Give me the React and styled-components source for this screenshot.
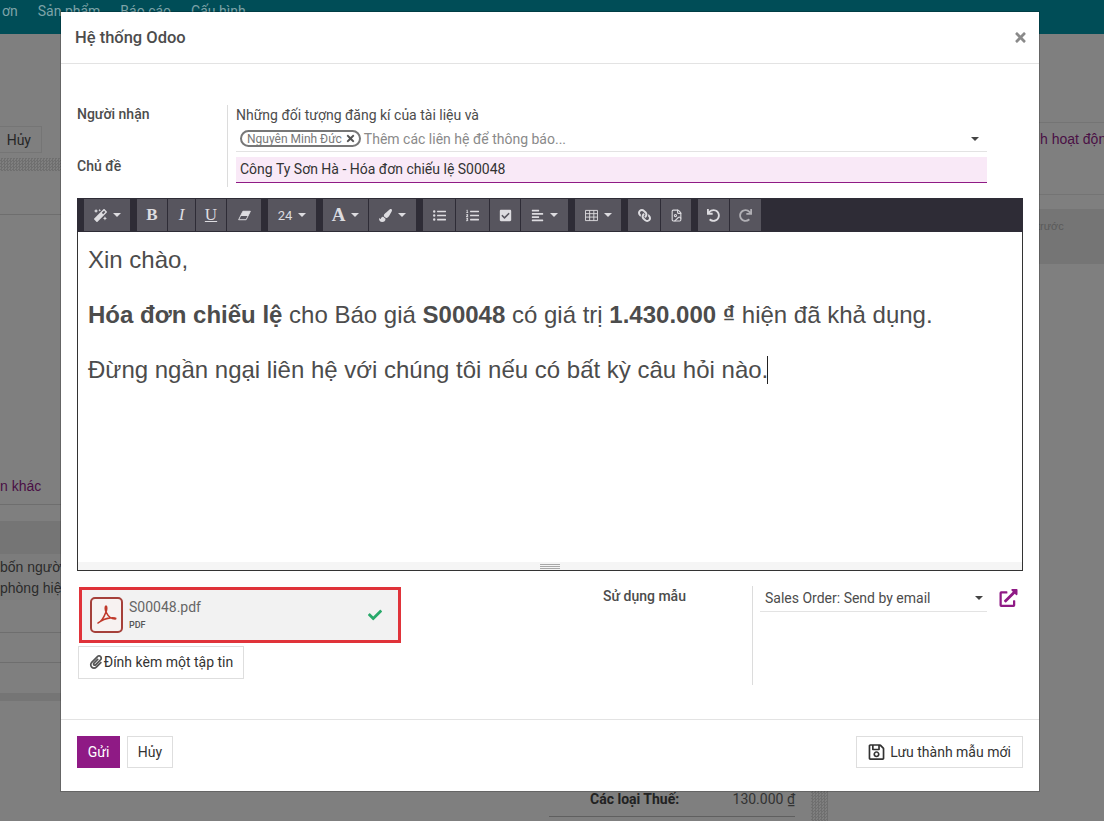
import React from "react";
import styled, { createGlobalStyle } from "styled-components";
import {
  FaMagic,
  FaPaintBrush,
  FaListUl,
  FaListOl,
  FaCheckSquare,
  FaAlignLeft,
  FaLink,
  FaUndo,
  FaRedo,
  FaPaperclip,
  FaRegSave,
  FaExternalLinkAlt,
  FaCheck,
  FaTimes,
} from "react-icons/fa";
import { FileImage } from "lucide-react";

const GlobalStyle = createGlobalStyle`
  html, body {
    margin: 0;
    padding: 0;
    background: #7f7f7f;
    font-family: Roboto, "Liberation Sans", sans-serif;
  }
  * { box-sizing: border-box; }
`;

const Page = styled.div`
  position: relative;
  width: 1104px;
  height: 821px;
  overflow: hidden;
  background: #7f7f7f;
  color: #333;
`;

/* dimmed page behind the dialog */
const TopBar = styled.div`
  display: flex;
  gap: 20px;
  height: 34px;
  padding: 1px 0 0 2px;
  background: #004d57;
  color: #7ea3a8;
  font-size: 14px;
  line-height: 21px;
`;

const PageBody = styled.div`
  display: flex;
  height: 787px;
`;

const MainCol = styled.div`
  width: 811px;
  flex: none;
  display: flex;
  flex-direction: column;
`;

const ControlRow = styled.div`
  height: 124px;
  padding-top: 92px;
  flex: none;
`;

const GhostButton = styled.div`
  width: 42px;
  height: 27px;
  border: 1px solid #757575;
  border-left: 0;
  text-align: right;
  padding-right: 10px;
  font-size: 14px;
  line-height: 26px;
  color: #262626;
`;

const PatternStrip = styled.div`
  flex: none;
  height: 13px;
  background: repeating-conic-gradient(#6f6f6f 0 25%, #7f7f7f 0 50%) 0 0 / 3px 3px;
`;

const Spacer = styled.div`
  flex: none;
  height: ${(p) => p.$h}px;
  border-bottom: ${(p) => (p.$line ? "1px solid #6e6e6e" : "0")};
  background: ${(p) => p.$bg || "transparent"};
`;

const BackLink = styled.div`
  flex: none;
  height: 19px;
  font-family: "Liberation Sans", sans-serif;
  font-size: 14px;
  line-height: 19px;
  color: #4a0f45;
`;

const BackNote = styled.div`
  flex: none;
  height: 46px;
  padding-top: 3px;
  background: #7c7c7c;
  border-bottom: 1px solid #7c7c7c;
  font-family: "Liberation Sans", sans-serif;
  font-size: 14px;
  line-height: 21px;
  color: #2b2b2b;
  white-space: nowrap;
`;

const Totals = styled.div`
  display: flex;
  justify-content: space-between;
  flex: none;
  width: 246px;
  margin-left: 549px;
  padding: 0 0 7px 41px;
  border-bottom: 1px solid #5f5f5f;
  font-size: 14px;
  line-height: 20px;
  color: #222;
  b { font-weight: 700; }
  span { color: #333; }
`;

const ScrollStrip = styled.div`
  width: 17px;
  flex: none;
  background: repeating-conic-gradient(#6f6f6f 0 25%, #7f7f7f 0 50%) 0 0 / 3px 3px;
`;

const SideCol = styled.div`
  flex: 1;
  min-width: 0;
  overflow: hidden;
  display: flex;
  flex-direction: column;
`;

const SideAction = styled.div`
  flex: none;
  height: 73px;
  margin-top: 88px;
  padding: 6px 0 0 212px;
  border-top: 1px solid #747474;
  border-bottom: 1px solid #747474;
  font-family: "Liberation Sans", sans-serif;
  font-size: 14px;
  line-height: 20px;
  color: #4a0f45;
  white-space: nowrap;
`;

const SideNote = styled.div`
  flex: none;
  height: 55px;
  margin-top: 14px;
  padding: 11px 0 0 209px;
  background: #757575;
  font-family: "Liberation Sans", sans-serif;
  font-size: 11px;
  color: #5a5a5a;
  white-space: nowrap;
`;

/* dialog */
const Modal = styled.div`
  position: absolute;
  top: 12px;
  left: 61px;
  width: 978px;
  height: 779px;
  display: flex;
  flex-direction: column;
  background: #fff;
  box-shadow: 0 0 0 1px rgba(0, 0, 0, 0.2);
`;

const ModalHeader = styled.div`
  height: 52px;
  flex: none;
  display: flex;
  align-items: center;
  justify-content: space-between;
  padding: 0 11px 0 14px;
  border-bottom: 1px solid #e3e3e3;
`;

const ModalTitle = styled.div`
  font-size: 16.5px;
  font-weight: 500;
  color: #4c4c4c;
`;

const CloseIcon = styled(FaTimes)`
  width: 15px;
  height: 15px;
  color: #8a8a8a;
`;

const ModalBody = styled.div`
  flex: 1;
  padding: 41px 16px 0;
  display: flex;
  flex-direction: column;
  border-bottom: 1px solid #e3e3e3;
`;

const FieldGrid = styled.div`
  display: grid;
  grid-template-columns: 150px 1fr;
  margin-right: 36px;
`;

const Label = styled.div`
  font-size: 14px;
  font-weight: 500;
  line-height: 19px;
  color: #4c4c4c;
`;

const FieldCell = styled.div`
  border-left: 1px solid #dcdcdc;
  padding-left: 8px;
  padding-bottom: ${(p) => p.$bottom || 0}px;
`;

const Followers = styled.div`
  font-size: 14px;
  line-height: 20px;
  color: #4c4c4c;
`;

const RecipientInput = styled.div`
  position: relative;
  display: flex;
  align-items: center;
  height: 27px;
  padding: 1px 0 0 4px;
  margin-bottom: 5px;
  border-bottom: 1px solid #e3e3e3;
  font-size: 14px;
  color: #8a8a8a;
`;

const Tag = styled.span`
  display: inline-flex;
  align-items: center;
  gap: 3px;
  height: 17px;
  margin-right: 3px;
  padding: 0 3px 0 5px;
  border: 2px solid #777;
  border-radius: 9px;
  font-size: 12px;
  color: #777;
  svg {
    width: 11px;
    height: 11px;
    color: #555;
  }
`;

const Caret = styled.span`
  width: 0;
  height: 0;
  border-left: 4px solid transparent;
  border-right: 4px solid transparent;
  border-top: 4px solid ${(p) => p.$color || "#444"};
  margin-left: auto;
  margin-right: ${(p) => p.$right || 0}px;
`;

const Subject = styled.div`
  height: 26px;
  padding-left: 4px;
  background: #f9e9f7;
  border-bottom: 1px solid #8f1a85;
  font-size: 14px;
  line-height: 24px;
  color: #333;
`;

const Toolbar = styled.div`
  flex: none;
  display: flex;
  gap: 7px;
  height: 34px;
  margin-top: 11px;
  padding: 1px 0 1px 7px;
  background: #2e2c36;
`;

const ToolGroup = styled.div`
  display: flex;
  gap: 1px;
`;

const Tool = styled.div`
  width: ${(p) => p.$w}px;
  display: flex;
  align-items: center;
  justify-content: center;
  gap: 6px;
  background: #57555e;
  color: ${(p) => (p.$dim ? "#b0afb4" : "#dddce0")};
  font-family: "Liberation Serif", serif;
  font-size: 17px;
  font-weight: ${(p) => (p.$bold ? 700 : 400)};
  font-style: ${(p) => (p.$italic ? "italic" : "normal")};
  text-decoration: ${(p) => (p.$under ? "underline" : "none")};
  svg {
    width: 13px;
    height: 13px;
  }
`;

const ToolSmall = styled.span`
  font-family: Roboto, sans-serif;
  font-size: 13px;
`;

const ToolLetter = styled.span`
  font-size: 19px;
  font-weight: 700;
`;

const ToolCaret = styled.span`
  border-left: 4px solid transparent;
  border-right: 4px solid transparent;
  border-top: 4px solid #dddce0;
`;

const ChainIcon = styled(FaLink)`
  transform: scaleX(-1);
`;

const Editor = styled.div`
  flex: none;
  position: relative;
  height: 339px;
  padding: 10px 10px 0;
  border: 1px solid #333;
  border-top: 0;
  font-family: "Liberation Sans", Arial, sans-serif;
  font-size: 24px;
  line-height: 35px;
  color: #4c4c4c;
  p {
    margin: 0 0 20px;
  }
  b {
    font-weight: 700;
  }
`;

const TextCursor = styled.span`
  display: inline-block;
  width: 1px;
  height: 28px;
  margin-left: -1px;
  vertical-align: -6px;
  background: #222;
`;

const ResizeBar = styled.div`
  position: absolute;
  left: 0;
  right: 0;
  bottom: 0;
  height: 8px;
  background: #f5f5f5;
  display: flex;
  flex-direction: column;
  align-items: center;
  justify-content: center;
  gap: 1px;
  i {
    width: 20px;
    height: 1px;
    background: #a8a8a8;
  }
`;

const Lower = styled.div`
  display: flex;
  margin-top: 15px;
  height: 99px;
`;

const AttachCol = styled.div`
  width: 526px;
  flex: none;
  padding-top: 1px;
`;

const AttachBox = styled.div`
  display: flex;
  align-items: center;
  width: 322px;
  height: 56px;
  margin-left: 2px;
  padding: 0 16px 0 8px;
  background: #f2f2f2;
  border: 3px solid #e0333a;
`;

const PdfBadge = styled.svg`
  width: 33px;
  height: 36px;
  flex: none;
  margin-right: 6px;
`;

const AttachText = styled.div`
  flex: 1;
  margin-top: -2px;
`;

const AttachName = styled.div`
  font-size: 14px;
  line-height: 18px;
  color: #666;
`;

const AttachType = styled.div`
  margin-top: 3px;
  font-size: 9px;
  font-weight: 500;
  line-height: 12px;
  color: #555;
`;

const DoneIcon = styled(FaCheck)`
  width: 14px;
  height: 14px;
  color: #28a96a;
`;

const OutlineButton = styled.div`
  display: inline-flex;
  align-items: center;
  justify-content: center;
  gap: ${(p) => p.$gap || 1}px;
  width: ${(p) => p.$w}px;
  height: ${(p) => p.$h || 33}px;
  margin-top: ${(p) => p.$top || 0}px;
  margin-left: ${(p) => p.$left || 0}px;
  padding-bottom: 1px;
  border: 1px solid #dedede;
  background: #fff;
  font-size: 14px;
  color: #333;
`;

const ClipIcon = styled(FaPaperclip)`
  width: 14px;
  height: 14px;
  color: #555;
`;

const SaveIcon = styled(FaRegSave)`
  width: 17px;
  height: 18px;
  color: #333;
`;

const TemplateLabel = styled.div`
  width: 149px;
  flex: none;
  font-size: 14px;
  font-weight: 500;
  line-height: 20px;
  color: #4c4c4c;
`;

const TemplateCell = styled.div`
  flex: 1;
  display: flex;
  align-items: flex-start;
  border-left: 1px solid #dcdcdc;
  padding-left: 7px;
`;

const TemplateSelect = styled.div`
  display: flex;
  align-items: center;
  width: 227px;
  height: 26px;
  padding: 0 4px 2px 5px;
  border-bottom: 1px solid #e3e3e3;
  font-size: 14px;
  color: #4c4c4c;
`;

const OpenIcon = styled(FaExternalLinkAlt)`
  width: 19px;
  height: 18px;
  margin: 3px 0 0 12px;
  color: #8f1a85;
`;

const ModalFooter = styled.div`
  flex: none;
  height: 71px;
  display: flex;
  align-items: center;
  gap: 7px;
  padding: 0 16px 7px;
`;

const PrimaryButton = styled.div`
  width: 43px;
  height: 32px;
  background: #8f1a85;
  color: #fff;
  font-size: 14px;
  line-height: 32px;
  text-align: center;
`;

const Push = styled.div`
  flex: 1;
`;

const navItems = ["ơn", "Sản phẩm", "Báo cáo", "Cấu hình"];

function EraserIcon() {
  return (
    <svg viewBox="0 0 16 12">
      <path d="M6 .8h9.2L10 11.2H.8z" fill="none" stroke="currentColor" strokeWidth="1.2" strokeLinejoin="round" />
      <path d="M6 .8h9.2L12.3 6.5H3.2z" fill="currentColor" />
    </svg>
  );
}

function GridIcon() {
  return (
    <svg viewBox="0 0 14 12">
      <path
        d="M.5.5h13v11H.5zM.5 4h13M.5 7.7h13M5 .5v11M9.5.5v11"
        fill="none"
        stroke="currentColor"
        strokeWidth="1"
      />
    </svg>
  );
}

export default function App() {
  return (
    <Page>
      <GlobalStyle />
      <TopBar>
        {navItems.map((item) => (
          <span key={item}>{item}</span>
        ))}
      </TopBar>
      <PageBody>
        <MainCol>
          <ControlRow>
            <GhostButton>Hủy</GhostButton>
          </ControlRow>
          <PatternStrip />
          <Spacer $h={44} $line />
          <Spacer $h={262} />
          <BackLink>n khác</BackLink>
          <Spacer $h={9} $line />
          <Spacer $h={16} />
          <Spacer $h={33} $bg="#757575" />
          <BackNote>
            bốn người
            <br />
            phòng hiệu
          </BackNote>
          <Spacer $h={33} $line />
          <Spacer $h={30} $line />
          <Spacer $h={30} />
          <Spacer $h={8} $bg="#757575" />
          <Spacer $h={88} />
          <Totals>
            <b>Các loại Thuế:</b>
            <span>130.000 ₫</span>
          </Totals>
        </MainCol>
        <ScrollStrip />
        <SideCol>
          <SideAction>h hoạt độn</SideAction>
          <SideNote>trước</SideNote>
        </SideCol>
      </PageBody>

      <Modal>
        <ModalHeader>
          <ModalTitle>Hệ thống Odoo</ModalTitle>
          <CloseIcon />
        </ModalHeader>
        <ModalBody>
          <FieldGrid>
            <Label>Người nhận</Label>
            <FieldCell>
              <Followers>Những đối tượng đăng kí của tài liệu và</Followers>
              <RecipientInput>
                <Tag>
                  Nguyên Minh Đức <FaTimes />
                </Tag>
                Thêm các liên hệ để thông báo...
                <Caret $right={8} />
              </RecipientInput>
            </FieldCell>
            <Label>Chủ đề</Label>
            <FieldCell $bottom={4}>
              <Subject>Công Ty Sơn Hà - Hóa đơn chiếu lệ S00048</Subject>
            </FieldCell>
          </FieldGrid>

          <Toolbar>
            <ToolGroup>
              <Tool $w={46}>
                <FaMagic />
                <ToolCaret />
              </Tool>
            </ToolGroup>
            <ToolGroup>
              <Tool $w={30} $bold>B</Tool>
              <Tool $w={27} $italic>I</Tool>
              <Tool $w={30} $under>U</Tool>
              <Tool $w={34}>
                <EraserIcon />
              </Tool>
            </ToolGroup>
            <ToolGroup>
              <Tool $w={48}>
                <ToolSmall>24</ToolSmall>
                <ToolCaret />
              </Tool>
            </ToolGroup>
            <ToolGroup>
              <Tool $w={45}>
                <ToolLetter>A</ToolLetter>
                <ToolCaret />
              </Tool>
              <Tool $w={47}>
                <FaPaintBrush />
                <ToolCaret />
              </Tool>
            </ToolGroup>
            <ToolGroup>
              <Tool $w={32}>
                <FaListUl />
              </Tool>
              <Tool $w={33}>
                <FaListOl />
              </Tool>
              <Tool $w={30}>
                <FaCheckSquare />
              </Tool>
              <Tool $w={47}>
                <FaAlignLeft />
                <ToolCaret />
              </Tool>
            </ToolGroup>
            <ToolGroup>
              <Tool $w={46}>
                <GridIcon />
                <ToolCaret />
              </Tool>
            </ToolGroup>
            <ToolGroup>
              <Tool $w={32}>
                <ChainIcon />
              </Tool>
              <Tool $w={30}>
                <FileImage strokeWidth={2} />
              </Tool>
            </ToolGroup>
            <ToolGroup>
              <Tool $w={31}>
                <FaUndo />
              </Tool>
              <Tool $w={31} $dim>
                <FaRedo />
              </Tool>
            </ToolGroup>
          </Toolbar>

          <Editor>
            <p>Xin chào,</p>
            <p>
              <b>Hóa đơn chiếu lệ</b> cho Báo giá <b>S00048</b> có giá trị{" "}
              <b>1.430.000 ₫</b> hiện đã khả dụng.
            </p>
            <p>
              Đừng ngần ngại liên hệ với chúng tôi nếu có bất kỳ câu hỏi nào.
              <TextCursor />
            </p>
            <ResizeBar>
              <i />
              <i />
              <i />
            </ResizeBar>
          </Editor>

          <Lower>
            <AttachCol>
              <AttachBox>
                <PdfBadge viewBox="0 0 33 36">
                  <rect x="1" y="1" width="31" height="34" rx="4" fill="#f7f2f1" stroke="#a5403a" strokeWidth="2" />
                  <path
                    d="M8 26c3-1 6-6 8-11 1-3 1-6 0-6s-1 3 0 6c2 4 5 7 9 7 1 0 1-1 0-1-4-1-11 1-14 3"
                    fill="none"
                    stroke="#c0392b"
                    strokeWidth="1.6"
                    strokeLinecap="round"
                    strokeLinejoin="round"
                  />
                </PdfBadge>
                <AttachText>
                  <AttachName>S00048.pdf</AttachName>
                  <AttachType>PDF</AttachType>
                </AttachText>
                <DoneIcon />
              </AttachBox>
              <OutlineButton $w={166} $top={3} $left={1}>
                <ClipIcon />
                Đính kèm một tập tin
              </OutlineButton>
            </AttachCol>
            <TemplateLabel>Sử dụng mẫu</TemplateLabel>
            <TemplateCell>
              <TemplateSelect>
                Sales Order: Send by email
                <Caret />
              </TemplateSelect>
              <OpenIcon />
            </TemplateCell>
          </Lower>
        </ModalBody>
        <ModalFooter>
          <PrimaryButton>Gửi</PrimaryButton>
          <OutlineButton $w={46} $h={32}>Hủy</OutlineButton>
          <Push />
          <OutlineButton $w={167} $h={32} $gap={5}>
            <SaveIcon />
            Lưu thành mẫu mới
          </OutlineButton>
        </ModalFooter>
      </Modal>
    </Page>
  );
}
